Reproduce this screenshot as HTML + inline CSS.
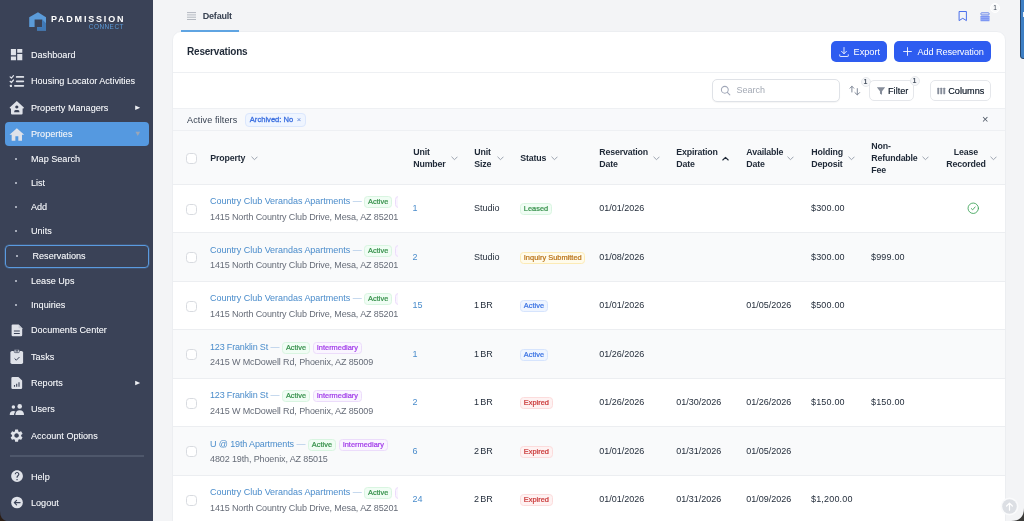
<!DOCTYPE html>
<html>
<head>
<meta charset="utf-8">
<title>Reservations</title>
<style>
*{box-sizing:border-box;margin:0;padding:0}
html,body{width:1024px;height:521px;overflow:hidden}
body{font-family:"Liberation Sans",sans-serif;background:#f3f4f6;position:relative;color:#1f2937;font-size:9px}
.abs{position:absolute}
#app{position:absolute;left:0;top:0;width:1024px;height:521px;overflow:hidden;will-change:transform}
#side{position:absolute;left:0;top:0;width:153px;height:521px;background:#3a4257}
#side .it{position:absolute;left:31px;font-size:9.1px;color:#f1f3f7;white-space:nowrap;line-height:12px;font-weight:400;letter-spacing:0;text-shadow:0 0 0.2px rgba(255,255,255,.45)}
#side .dot{position:absolute;left:15px;width:2px;height:2px;border-radius:50%;background:#c9ced8}
#side .arrow{position:absolute;left:134px;font-size:7px;color:#e8ebf0;line-height:8px}
#act{position:absolute;left:5px;top:122px;width:143.7px;height:24px;background:#5599e0;border-radius:4px}
#sel{position:absolute;left:5px;top:244.5px;width:143.7px;height:23.5px;border:1.2px solid #5a9be0;border-radius:4px;box-shadow:0 0 0 0.5px rgba(90,155,224,.4)}
#sdiv{position:absolute;left:9.7px;top:455px;width:134px;height:2px;background:#4e576b}
#tabline{position:absolute;left:181px;top:30.2px;width:58px;height:1.8px;background:#5fa4e2;z-index:5}
#card{position:absolute;left:172px;top:31px;width:833.6px;height:500px;background:#fff;border-radius:9px 9px 0 0;border:1px solid #eceef1;overflow:hidden}
.btn{position:absolute;top:8.8px;height:21.2px;background:#2e5cf0;border-radius:5px;color:#fff;font-size:9.2px;line-height:21.2px;white-space:nowrap}
.obtn{position:absolute;top:48.4px;height:20.6px;background:#fff;border:1px solid #e5e7eb;border-radius:5px;color:#1f2937;font-size:9.2px;line-height:20px;white-space:nowrap;font-weight:400;text-shadow:0 0 0.3px rgba(31,41,55,.7)}
.badge1{position:absolute;width:10px;height:10px;border-radius:50%;background:#f6f7f9;border:1px solid #e8eaee;font-size:7px;font-weight:700;line-height:8px;text-align:center;color:#4b5563}
.hl{position:absolute;left:0;width:833px;height:1px;background:#eef0f3}
.th{position:absolute;font-size:8.8px;font-weight:700;color:#1f2937;line-height:12px;white-space:nowrap;letter-spacing:-0.16px;margin-left:0.3px}
.chev{position:absolute;width:7px;height:5px}
.row{position:absolute;left:0;width:833px;height:49px;border-top:1px solid #eceef1}
.row.alt{background:#f9fafb}
.cb{position:absolute;left:12.5px;width:11px;height:11px;border:1px solid #d8dbe0;border-radius:3.5px;background:#fff}
.c{position:absolute;font-size:9px;line-height:12px;white-space:nowrap;color:#1f2937}
.m{letter-spacing:0.18px}
.lnk{color:#4a8ccb}
.addr{color:#666c78;letter-spacing:-0.12px}
.prop{position:absolute;left:37px;width:188.3px;overflow:hidden;white-space:nowrap;height:14px;font-size:0}
.prop>*{vertical-align:top}
.tag{display:inline-block;vertical-align:top;height:12px;line-height:10.3px;padding:0 2.8px;border-radius:3.5px;font-size:7.4px;font-weight:400;-webkit-text-stroke:0.22px currentColor;border:1px solid;letter-spacing:0.02px;position:relative;top:1px}
.tg{color:#36914b;background:#f0fdf4;border-color:#d9f5e1}
.tp{color:#a23cea;background:#faf5ff;border-color:#ecdcfb}
.tb{color:#3a72e3;background:#eff5ff;border-color:#d6e4fd}
.tr{color:#c93434;background:#fef2f2;border-color:#fcdcdc}
.ty{color:#ba7318;background:#fffbeb;border-color:#fcebb6}
.dash{color:#a9c6e6;font-size:9px;line-height:12px;display:inline-block;margin:0 2.6px 0 2.5px;letter-spacing:-2.2px;padding-right:2.2px}
</style>
</head>
<body>
<div id="app">
<div id="side">
<div id="act"></div>
<div id="sel"></div>
<div id="sdiv"></div>
<svg class="abs" style="left:0;top:0" width="153" height="40" viewBox="0 0 153 40">
<path d="M29.2 17.3 L38 12.3 L46 17.3 L46 30.6 L37 30.6 L37 27.3 L42.2 27.3 L42.2 19.5 L34.6 19.5 L34.6 27 L29.2 27 Z" fill="#5b9bd9"/>
<path d="M42.2 19.5 L46 23.2 L46 30.6 L37 30.6 L37 27.3 L42.2 27.3 Z" fill="#3f78b6"/>
</svg>
<div class="abs" id="lg1" style="left:50.9px;top:12.7px;font-size:9px;font-weight:700;color:#fff;letter-spacing:1.8px;line-height:12px;white-space:nowrap">PADMISSION</div>
<div class="abs" id="lg2" style="left:88.8px;top:22.4px;font-size:6.4px;color:#5b9bd9;letter-spacing:0.5px;line-height:10px;white-space:nowrap">CONNECT</div>
<div class="it" style="top:49px;left:31px">Dashboard</div>
<div class="it" style="top:75px;left:31px">Housing Locator Activities</div>
<div class="it" style="top:102px;left:31px">Property Managers</div>
<div class="it" style="top:128px;left:31px">Properties</div>
<div class="it" style="top:153px;left:31px">Map Search</div>
<div class="it" style="top:177px;left:31px">List</div>
<div class="it" style="top:201px;left:31px">Add</div>
<div class="it" style="top:225px;left:31px">Units</div>
<div class="it" style="top:250px;left:32.5px">Reservations</div>
<div class="it" style="top:275px;left:31px">Lease Ups</div>
<div class="it" style="top:299px;left:31px">Inquiries</div>
<div class="it" style="top:324px;left:31px">Documents Center</div>
<div class="it" style="top:351px;left:31px">Tasks</div>
<div class="it" style="top:377px;left:31px">Reports</div>
<div class="it" style="top:403px;left:31px">Users</div>
<div class="it" style="top:430px;left:31px">Account Options</div>
<div class="it" style="top:471px;left:31px">Help</div>
<div class="it" style="top:497px;left:31px">Logout</div>
<div class="dot" style="top:158px;left:15px"></div>
<div class="dot" style="top:182px;left:15px"></div>
<div class="dot" style="top:206px;left:15px"></div>
<div class="dot" style="top:230px;left:15px"></div>
<div class="dot" style="top:255px;left:16px"></div>
<div class="dot" style="top:280px;left:15px"></div>
<div class="dot" style="top:304px;left:15px"></div>
<svg class="abs" style="left:130px;top:100px" width="16" height="16" viewBox="130 100 16 16"><path d="M135.2 105.6V110.1L140.2 107.85Z" fill="#eef0f4"/></svg>
<svg class="abs" style="left:130px;top:375px" width="16" height="16" viewBox="130 375 16 16"><path d="M135.2 380.75V385.25L140.2 383Z" fill="#eef0f4"/></svg>
<svg class="abs" style="left:130px;top:126px" width="16" height="16" viewBox="130 126 16 16"><path d="M135.5 131.8H140.1L137.8 136.1Z" fill="#9aa6b6"/></svg>
<svg class="abs" style="left:9.40px;top:47.40px" width="15.2" height="15.2" viewBox="0 0 24 24" fill="#dfe2e9" ><path d="M3 13h8V3H3v10zm0 8h8v-6H3v6zm10 0h8V11h-8v10zm0-18v6h8V3h-8z"/></svg>
<svg class="abs" style="left:8px;top:73px" width="18" height="16" viewBox="8 73 18 16" fill="none" stroke="#dfe2e9">
<path d="M16.7 76.9H23.3M16.7 81.35H23.3M14.9 85.85H23.3" stroke-width="1.8" stroke-linecap="round"/>
<path d="M10.1 76.9l1.3 1.2l2.1-2.5M10.1 81.3l1.3 1.2l2.1-2.5" stroke-width="1.2" stroke-linecap="round" stroke-linejoin="round"/>
<rect x="9.9" y="84.8" width="2.1" height="2.1" rx="0.5" fill="#dfe2e9" stroke="none"/></svg>
<svg class="abs" style="left:8px;top:99px" width="18" height="17" viewBox="8 99 18 17">
<path fill="#dfe2e9" fill-rule="evenodd" d="M16.8 101 L23.9 107.6 Q24.1 108.4 23.3 108.4 L22.6 108.4 L22.6 113.4 Q22.6 114.5 21.5 114.5 L12.1 114.5 Q11 114.5 11 113.4 L11 108.4 L10.3 108.4 Q9.5 108.4 9.7 107.6 Z
M16.8 105.4 a1.6 1.6 0 1 0 0.001 0 Z M14.1 112.3 Q14.1 110.1 15.6 110.1 L18 110.1 Q19.5 110.1 19.5 112.3 Z"/></svg>
<svg class="abs" style="left:8.05px;top:125.55px" width="17.7" height="17.7" viewBox="0 0 24 24" fill="#dfe2e9" ><path d="M10 20v-6h4v6h5v-8h3L12 3 2 12h3v8z"/></svg>
<svg class="abs" style="left:8px;top:322px" width="18" height="16" viewBox="8 322 18 16">
<path fill="#dfe2e9" d="M12.8 324.6 H18.6 L22.2 328.2 V335 Q22.2 336.2 21 336.2 H12.8 Q11.6 336.2 11.6 335 V325.8 Q11.6 324.6 12.8 324.6Z"/>
<path d="M18.6 324.6 V328.2 H22.2Z" fill="#c3c8d3"/>
<path d="M13.9 331 H19.8 M13.9 333.5 H19.8" stroke="#3a4257" stroke-width="1"/></svg>
<svg class="abs" style="left:8px;top:347px" width="18" height="19" viewBox="8 347 18 19">
<rect x="10.4" y="350.9" width="12.7" height="13" rx="1.6" fill="#dfe2e9"/>
<rect x="14.2" y="349.6" width="5.2" height="3" rx="1" fill="#dfe2e9" stroke="#3a4257" stroke-width="0.7"/>
<rect x="15.3" y="350.3" width="3" height="1.1" rx="0.5" fill="#3a4257"/>
<path d="M14.9 358.8 L16.3 360.2 L19.2 357.3" fill="none" stroke="#3a4257" stroke-width="1" stroke-linecap="round" stroke-linejoin="round"/></svg>
<svg class="abs" style="left:8px;top:374px" width="18" height="17" viewBox="8 374 18 17">
<path fill="#dfe2e9" d="M12.6 376.9 H18.4 L22.15 380.6 V387.7 Q22.15 388.9 20.95 388.9 H12.6 Q11.35 388.9 11.35 387.7 V378.1 Q11.35 376.9 12.6 376.9Z"/>
<path d="M14.5 386.8 V384.9 M16.7 386.8 V383.7 M19 386.8 V382.2" stroke="#3a4257" stroke-width="1.1"/></svg>
<svg class="abs" style="left:8px;top:402px" width="18" height="15" viewBox="8 402 18 15" fill="#dfe2e9">
<circle cx="13.4" cy="406.9" r="1.75"/><circle cx="19.7" cy="406.4" r="2.3"/>
<path d="M15.4 415 Q15.4 410.3 19.7 410.3 Q24 410.3 24 415Z"/>
<path d="M9.7 415 Q9.7 411 13.4 411 Q14.7 411 15.5 411.5 Q14 412.7 14 415Z"/></svg>
<svg class="abs" style="left:9.10px;top:428.20px" width="15.2" height="15.2" viewBox="0 0 24 24" fill="#dfe2e9" ><path d="M19.14 12.94c.04-.3.06-.61.06-.94 0-.32-.02-.64-.07-.94l2.03-1.58c.18-.14.23-.41.12-.61l-1.92-3.32c-.12-.22-.37-.29-.59-.22l-2.39.96c-.5-.38-1.03-.7-1.62-.94l-.36-2.54c-.04-.24-.24-.41-.48-.41h-3.84c-.24 0-.43.17-.47.41l-.36 2.54c-.59.24-1.13.57-1.62.94l-2.39-.96c-.22-.08-.47 0-.59.22L2.74 8.87c-.12.21-.08.47.12.61l2.03 1.58c-.05.3-.09.63-.09.94s.02.64.07.94l-2.03 1.58c-.18.14-.23.41-.12.61l1.92 3.32c.12.22.37.29.59.22l2.39-.96c.5.38 1.03.7 1.62.94l.36 2.54c.05.24.24.41.48.41h3.84c.24 0 .44-.17.47-.41l.36-2.54c.59-.24 1.13-.56 1.62-.94l2.39.96c.22.08.47 0 .59-.22l1.92-3.32c.12-.22.07-.47-.12-.61l-2.01-1.58zM12 15.6c-1.98 0-3.6-1.62-3.6-3.6s1.62-3.6 3.6-3.6 3.6 1.62 3.6 3.6-1.62 3.6-3.6 3.6z"/></svg>
<svg class="abs" style="left:9.95px;top:469.20px" width="14.1" height="14.1" viewBox="0 0 24 24" fill="#dfe2e9" ><path d="M12 2C6.48 2 2 6.48 2 12s4.48 10 10 10 10-4.48 10-10S17.52 2 12 2zm1 17h-2v-2h2v2zm2.07-7.75l-.9.92C13.45 12.9 13 13.5 13 15h-2v-.5c0-1.1.45-2.1 1.17-2.83l1.24-1.26c.370-.360.59-.860.59-1.41 0-1.1-.9-2-2-2s-2 .9-2 2H8c0-2.21 1.79-4 4-4s4 1.79 4 4c0 .880-.360 1.68-.930 2.25z"/></svg>
<svg class="abs" style="left:9px;top:494px" width="16" height="16" viewBox="9 494 16 16">
<circle cx="17" cy="502.5" r="5.85" fill="#dfe2e9"/>
<path d="M20.1 502.6 H14.4 M16.6 500.3 L14.3 502.6 L16.6 504.9" fill="none" stroke="#3a4257" stroke-width="1.1" stroke-linecap="round" stroke-linejoin="round"/></svg>
</div>
<div id="tabline"></div>
<svg class="abs" style="left:187px;top:12px" width="9" height="8" viewBox="0 0 9 8" stroke="#b3b8c0" stroke-width="1"><path d="M0 0.6h9M0 2.9h9M0 5.2h9M0 7.5h9"/></svg>
<div class="abs" style="left:202.8px;top:10.2px;font-size:9px;font-weight:700;color:#374151;line-height:12px;letter-spacing:-0.22px">Default</div>
<svg class="abs" style="left:957px;top:10px" width="12" height="12" viewBox="0 0 12 12" fill="none" stroke="#4268ea" stroke-width="0.95" stroke-linejoin="round"><path d="M2.1 1.5h7.3v9.1L5.75 8.3 2.1 10.6z"/></svg>
<svg class="abs" style="left:979.5px;top:11.5px" width="10" height="10" viewBox="0 0 10 10"><rect x="0.9" y="0.8" width="8.2" height="2.1" rx="0.7" fill="none" stroke="#4a6fe6" stroke-width="0.8"/><rect x="0.5" y="3.7" width="9" height="5.6" rx="0.5" fill="#7d97f3"/><path d="M0.5 5.5h9M0.5 7.4h9" stroke="#b4c3f8" stroke-width="0.45"/></svg>
<div class="abs" style="left:990px;top:3.3px;width:10px;height:10px;border-radius:50%;background:#f9fafb;border:1px solid #fff;font-size:6.5px;line-height:8.5px;text-align:center;color:#374151">1</div>
<div class="abs" style="left:1019.8px;top:-6px;width:10px;height:65.3px;border-radius:3px;background:#3d7fc4;border:1px solid #27466b"></div>
<div class="abs" style="left:1022.8px;top:12px;width:2px;height:5px;background:#e8eef7"></div>
<div id="card">
<div class="abs" id="title" style="left:14px;top:14.2px;font-size:10px;font-weight:700;letter-spacing:-0.2px;line-height:12px;color:#1f2937;white-space:nowrap">Reservations</div>
<div class="btn" style="left:658px;width:56px"><svg class="abs" style="left:7px;top:5.2px" width="12" height="12" viewBox="0 0 24 24" fill="none" stroke="#fff" stroke-width="1.7" stroke-linecap="round" stroke-linejoin="round"><path d="M12 3v12M7 10.5l5 5 5-5M3.5 17.5v2.5a1 1 0 0 0 1 1h15a1 1 0 0 0 1-1v-2.5"/></svg><span class="abs" style="left:22.5px;top:1px">Export</span></div>
<div class="btn" style="left:721px;width:96.8px"><svg class="abs" style="left:8px;top:5.6px" width="11" height="11" viewBox="0 0 24 24" fill="none" stroke="#fff" stroke-width="1.9" stroke-linecap="round"><path d="M12 3.5v17M3.5 12h17"/></svg><span class="abs" style="left:23.5px;top:1px;letter-spacing:-0.12px">Add Reservation</span></div>
<div class="hl" style="top:40px"></div>
<div class="abs" style="left:539px;top:47px;width:128px;height:22.6px;border:1px solid #dfe2e7;border-radius:5px;background:#fff;box-shadow:0 1px 1px rgba(0,0,0,.04)">
<svg class="abs" style="left:6.5px;top:5.3px" width="11" height="11" viewBox="0 0 24 24" fill="none" stroke="#a0a7b8" stroke-width="2.2" stroke-linecap="round"><circle cx="10.5" cy="10.5" r="7.5"/><path d="M16 16l5.5 5.5"/></svg>
<span class="abs" style="left:23.5px;top:4.4px;font-size:9px;line-height:12px;color:#a3a9b4">Search</span></div>
<svg class="abs" style="left:673px;top:50px" width="18" height="16" viewBox="846 82 18 16" fill="none" stroke="#7b8494" stroke-width="0.95" stroke-linecap="round" stroke-linejoin="round"><path d="M851.9 92V86.3M850 88.2l1.9-1.9 1.9 1.9M857.3 88.6v6.1M854.9 92.6l2.4 2.3 2.3-2.3"/></svg>
<div class="badge1" style="left:687.5px;top:44.5px">1</div>
<div class="obtn" style="left:696.4px;width:45px"><svg class="abs" style="left:6px;top:4.7px" width="10" height="10" viewBox="0 0 24 24" fill="#868d9a"><path d="M2 3h20l-7.5 9.5V21l-5-2.5v-6z"/></svg><span class="abs" style="left:17.6px;top:0">Filter</span></div>
<div class="badge1" style="left:736.5px;top:44px">1</div>
<div class="obtn" style="left:757.2px;width:60.6px"><svg class="abs" style="left:6.3px;top:5.7px" width="9" height="8" viewBox="0 0 9 8" fill="#868d9a"><rect x="0.3" y="0.8" width="1.9" height="6.4" rx="0.4"/><rect x="3.3" y="0.8" width="1.9" height="6.4" rx="0.4"/><rect x="6.3" y="0.8" width="1.9" height="6.4" rx="0.4"/></svg><span class="abs" style="left:17px;top:0">Columns</span></div>
<div class="hl" style="top:76px"></div>
<div class="abs" style="left:0;top:77px;width:833px;height:21px;background:#f8f9fb"></div>
<div class="abs" style="left:14px;top:81.5px;font-size:9px;line-height:12px;color:#374151;white-space:nowrap;letter-spacing:0.13px">Active filters</div>
<div class="abs" style="left:71.6px;top:80.8px;width:61.3px;height:13.8px;border-radius:4px;background:#eff5ff;border:1px solid #dbe7fd;font-size:7.6px;font-weight:400;-webkit-text-stroke:0.3px #3b6fe0;color:#3b6fe0;line-height:11.8px;white-space:nowrap;padding-left:4.2px;letter-spacing:0">Archived: No<span style="-webkit-text-stroke:0;color:#5a83d8;margin-left:3.5px">&times;</span></div>
<div class="abs" style="left:809px;top:81px;font-size:11px;line-height:12px;color:#4b5563">&times;</div>
<div class="hl" style="top:98px"></div>
<div class="abs" style="left:0;top:99px;width:833px;height:53px;background:#f9fafb"></div>
<div class="cb" style="top:120.6px"></div>
<div class="th" style="left:37px;top:120px;">Property</div>
<svg class="chev" style="left:77.5px;top:123.6px" viewBox="0 0 7 5" fill="none" stroke="#9ca3af" stroke-width="1" stroke-linecap="round" stroke-linejoin="round"><path d="M0.8 1l2.7 2.7L6.2 1"/></svg>
<div class="th" style="left:240px;top:114px;">Unit<br>Number</div>
<svg class="chev" style="left:277.5px;top:123.6px" viewBox="0 0 7 5" fill="none" stroke="#9ca3af" stroke-width="1" stroke-linecap="round" stroke-linejoin="round"><path d="M0.8 1l2.7 2.7L6.2 1"/></svg>
<div class="th" style="left:301px;top:114px;">Unit<br>Size</div>
<svg class="chev" style="left:324px;top:123.6px" viewBox="0 0 7 5" fill="none" stroke="#9ca3af" stroke-width="1" stroke-linecap="round" stroke-linejoin="round"><path d="M0.8 1l2.7 2.7L6.2 1"/></svg>
<div class="th" style="left:347px;top:120px;">Status</div>
<svg class="chev" style="left:377.5px;top:123.6px" viewBox="0 0 7 5" fill="none" stroke="#9ca3af" stroke-width="1" stroke-linecap="round" stroke-linejoin="round"><path d="M0.8 1l2.7 2.7L6.2 1"/></svg>
<div class="th" style="left:426px;top:114px;">Reservation<br>Date</div>
<svg class="chev" style="left:479.5px;top:123.6px" viewBox="0 0 7 5" fill="none" stroke="#9ca3af" stroke-width="1" stroke-linecap="round" stroke-linejoin="round"><path d="M0.8 1l2.7 2.7L6.2 1"/></svg>
<div class="th" style="left:503px;top:114px;">Expiration<br>Date</div>
<svg class="chev" style="left:548.5px;top:123.6px" viewBox="0 0 7 5" fill="none" stroke="#1f2937" stroke-width="1.1" stroke-linecap="round" stroke-linejoin="round"><path d="M0.8 4l2.7-2.7L6.2 4"/></svg>
<div class="th" style="left:573px;top:114px;">Available<br>Date</div>
<svg class="chev" style="left:614px;top:123.6px" viewBox="0 0 7 5" fill="none" stroke="#9ca3af" stroke-width="1" stroke-linecap="round" stroke-linejoin="round"><path d="M0.8 1l2.7 2.7L6.2 1"/></svg>
<div class="th" style="left:638px;top:114px;">Holding<br>Deposit</div>
<svg class="chev" style="left:675px;top:123.6px" viewBox="0 0 7 5" fill="none" stroke="#9ca3af" stroke-width="1" stroke-linecap="round" stroke-linejoin="round"><path d="M0.8 1l2.7 2.7L6.2 1"/></svg>
<div class="th" style="left:698px;top:108px;">Non-<br>Refundable<br>Fee</div>
<svg class="chev" style="left:749px;top:123.6px" viewBox="0 0 7 5" fill="none" stroke="#9ca3af" stroke-width="1" stroke-linecap="round" stroke-linejoin="round"><path d="M0.8 1l2.7 2.7L6.2 1"/></svg>
<div class="th" style="left:773px;top:114px;text-align:center;">Lease<br>Recorded</div>
<svg class="chev" style="left:817.2px;top:123.6px" viewBox="0 0 7 5" fill="none" stroke="#9ca3af" stroke-width="1" stroke-linecap="round" stroke-linejoin="round"><path d="M0.8 1l2.7 2.7L6.2 1"/></svg>
<div class="row" style="top:151.5px"><div class="cb" style="top:19.2px"></div><div class="prop" style="top:10.7px"><span class="lnk" style="font-size:9px;line-height:12px;letter-spacing:-0.03px">Country Club Verandas Apartments</span><span class="dash">&mdash;</span><span class="tag tg">Active</span><span class="tag tp" style="margin-left:3px">Intermediary</span></div><div class="c addr" style="left:37px;top:26.0px">1415 North Country Club Drive, Mesa, AZ 85201</div><div class="c lnk" style="left:239.4px;top:17.7px">1</div><div class="c" style="left:301px;top:17.7px;word-spacing:-1.3px">Studio</div><div class="abs" style="left:347px;top:17.7px"><span class="tag tg">Leased</span></div><div class="c" style="left:426.3px;top:17.7px">01/01/2026</div><div class="c m" style="left:638px;top:17.7px">$300.00</div><svg class="abs" style="left:793.5px;top:17.9px" width="12.5" height="12.5" viewBox="0 0 24 24" fill="none" stroke="#3fa45b" stroke-width="1.7" stroke-linecap="round" stroke-linejoin="round"><circle cx="12" cy="12" r="10"/><path d="M8.3 12.6l2.5 2.5 4.8-5.6"/></svg></div>
<div class="row alt" style="top:200.0px"><div class="cb" style="top:19.2px"></div><div class="prop" style="top:10.7px"><span class="lnk" style="font-size:9px;line-height:12px;letter-spacing:-0.03px">Country Club Verandas Apartments</span><span class="dash">&mdash;</span><span class="tag tg">Active</span><span class="tag tp" style="margin-left:3px">Intermediary</span></div><div class="c addr" style="left:37px;top:26.0px">1415 North Country Club Drive, Mesa, AZ 85201</div><div class="c lnk" style="left:239.4px;top:17.7px">2</div><div class="c" style="left:301px;top:17.7px;word-spacing:-1.3px">Studio</div><div class="abs" style="left:347px;top:17.7px"><span class="tag ty">Inquiry Submitted</span></div><div class="c" style="left:426.3px;top:17.7px">01/08/2026</div><div class="c m" style="left:638px;top:17.7px">$300.00</div><div class="c m" style="left:698px;top:17.7px">$999.00</div></div>
<div class="row" style="top:248.5px"><div class="cb" style="top:19.2px"></div><div class="prop" style="top:10.7px"><span class="lnk" style="font-size:9px;line-height:12px;letter-spacing:-0.03px">Country Club Verandas Apartments</span><span class="dash">&mdash;</span><span class="tag tg">Active</span><span class="tag tp" style="margin-left:3px">Intermediary</span></div><div class="c addr" style="left:37px;top:26.0px">1415 North Country Club Drive, Mesa, AZ 85201</div><div class="c lnk" style="left:239.4px;top:17.7px">15</div><div class="c" style="left:301px;top:17.7px;word-spacing:-1.3px">1 BR</div><div class="abs" style="left:347px;top:17.7px"><span class="tag tb">Active</span></div><div class="c" style="left:426.3px;top:17.7px">01/01/2026</div><div class="c" style="left:573.3px;top:17.7px">01/05/2026</div><div class="c m" style="left:638px;top:17.7px">$500.00</div></div>
<div class="row alt" style="top:297.0px"><div class="cb" style="top:19.2px"></div><div class="prop" style="top:10.7px"><span class="lnk" style="font-size:9px;line-height:12px;letter-spacing:-0.17px">123 Franklin St</span><span class="dash">&mdash;</span><span class="tag tg">Active</span><span class="tag tp" style="margin-left:3px">Intermediary</span></div><div class="c addr" style="left:37px;top:26.0px">2415 W McDowell Rd, Phoenix, AZ 85009</div><div class="c lnk" style="left:239.4px;top:17.7px">1</div><div class="c" style="left:301px;top:17.7px;word-spacing:-1.3px">1 BR</div><div class="abs" style="left:347px;top:17.7px"><span class="tag tb">Active</span></div><div class="c" style="left:426.3px;top:17.7px">01/26/2026</div></div>
<div class="row" style="top:345.5px"><div class="cb" style="top:19.2px"></div><div class="prop" style="top:10.7px"><span class="lnk" style="font-size:9px;line-height:12px;letter-spacing:-0.17px">123 Franklin St</span><span class="dash">&mdash;</span><span class="tag tg">Active</span><span class="tag tp" style="margin-left:3px">Intermediary</span></div><div class="c addr" style="left:37px;top:26.0px">2415 W McDowell Rd, Phoenix, AZ 85009</div><div class="c lnk" style="left:239.4px;top:17.7px">2</div><div class="c" style="left:301px;top:17.7px;word-spacing:-1.3px">1 BR</div><div class="abs" style="left:347px;top:17.7px"><span class="tag tr">Expired</span></div><div class="c" style="left:426.3px;top:17.7px">01/26/2026</div><div class="c" style="left:503.3px;top:17.7px">01/30/2026</div><div class="c" style="left:573.3px;top:17.7px">01/26/2026</div><div class="c m" style="left:638px;top:17.7px">$150.00</div><div class="c m" style="left:698px;top:17.7px">$150.00</div></div>
<div class="row alt" style="top:394.0px"><div class="cb" style="top:19.2px"></div><div class="prop" style="top:10.7px"><span class="lnk" style="font-size:9px;line-height:12px;letter-spacing:-0.12px">U @ 19th Apartments</span><span class="dash">&mdash;</span><span class="tag tg">Active</span><span class="tag tp" style="margin-left:3px">Intermediary</span></div><div class="c addr" style="left:37px;top:26.0px">4802 19th, Phoenix, AZ 85015</div><div class="c lnk" style="left:239.4px;top:17.7px">6</div><div class="c" style="left:301px;top:17.7px;word-spacing:-1.3px">2 BR</div><div class="abs" style="left:347px;top:17.7px"><span class="tag tr">Expired</span></div><div class="c" style="left:426.3px;top:17.7px">01/01/2026</div><div class="c" style="left:503.3px;top:17.7px">01/31/2026</div><div class="c" style="left:573.3px;top:17.7px">01/05/2026</div></div>
<div class="row" style="top:442.5px"><div class="cb" style="top:19.2px"></div><div class="prop" style="top:10.7px"><span class="lnk" style="font-size:9px;line-height:12px;letter-spacing:-0.03px">Country Club Verandas Apartments</span><span class="dash">&mdash;</span><span class="tag tg">Active</span><span class="tag tp" style="margin-left:3px">Intermediary</span></div><div class="c addr" style="left:37px;top:26.0px">1415 North Country Club Drive, Mesa, AZ 85201</div><div class="c lnk" style="left:239.4px;top:17.7px">24</div><div class="c" style="left:301px;top:17.7px;word-spacing:-1.3px">2 BR</div><div class="abs" style="left:347px;top:17.7px"><span class="tag tr">Expired</span></div><div class="c" style="left:426.3px;top:17.7px">01/01/2026</div><div class="c" style="left:503.3px;top:17.7px">01/31/2026</div><div class="c" style="left:573.3px;top:17.7px">01/09/2026</div><div class="c m" style="left:638px;top:17.7px">$1,200.00</div></div>
</div>
<svg class="abs" style="left:999.5px;top:497px" width="19" height="19" viewBox="0 0 19 19"><circle cx="9.5" cy="9.5" r="9" fill="#fafbfc"/><circle cx="9.5" cy="9.5" r="7.3" fill="#dcdfe4"/><path d="M9.5 13.2V6.2M6.6 9l2.9-2.9L12.4 9" fill="none" stroke="#fff" stroke-width="1.2" stroke-linecap="round" stroke-linejoin="round"/></svg>
<svg class="abs" style="left:0;top:510.5px" width="10.5" height="10.5" viewBox="0 0 12 12"><path d="M0 0 Q0 12 12 12 H0Z" fill="#2b1e16"/></svg>
<svg class="abs" style="left:1011px;top:508px" width="13" height="13" viewBox="0 0 12 12"><path d="M12 0 Q12 12 0 12 H12Z" fill="#3a3a38"/></svg>
</div>
</body>
</html>
